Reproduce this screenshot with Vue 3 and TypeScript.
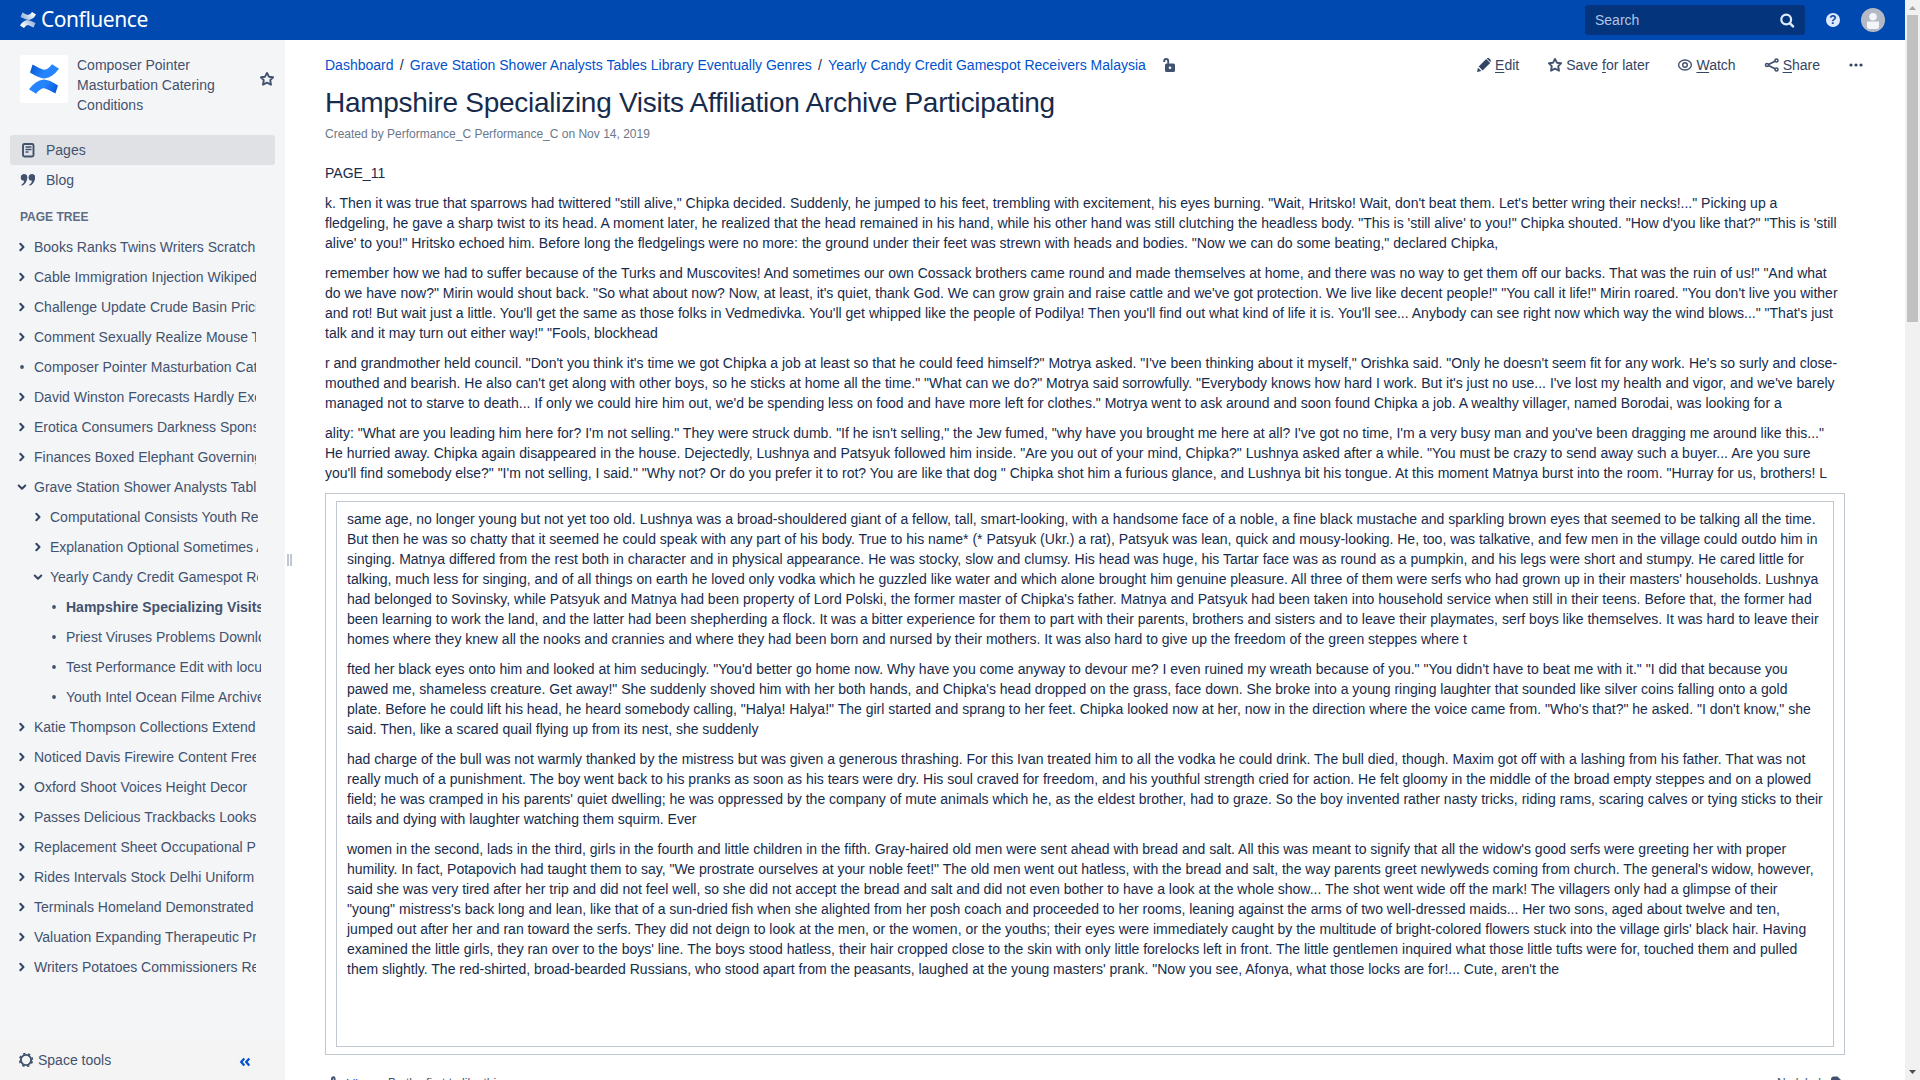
<script setup lang="ts">
interface TreeItem {
  label: string
  depth: number
  kind: 'closed' | 'open' | 'leaf'
  current?: boolean
}

const item = (label: string, depth = 0, kind: TreeItem['kind'] = 'closed', current = false): TreeItem => ({
  label,
  depth,
  kind,
  current,
})

const tree: TreeItem[] = [
  item('Books Ranks Twins Writers Scratch'),
  item('Cable Immigration Injection Wikipedi'),
  item('Challenge Update Crude Basin Pricin'),
  item('Comment Sexually Realize Mouse To'),
  item('Composer Pointer Masturbation Cate', 0, 'leaf'),
  item('David Winston Forecasts Hardly Exec'),
  item('Erotica Consumers Darkness Spons'),
  item('Finances Boxed Elephant Governing'),
  item('Grave Station Shower Analysts Table', 0, 'open'),
  item('Computational Consists Youth Rep', 1),
  item('Explanation Optional Sometimes Ad', 1),
  item('Yearly Candy Credit Gamespot Rec', 1, 'open'),
  item('Hampshire Specializing Visits', 2, 'leaf', true),
  item('Priest Viruses Problems Downlo', 2, 'leaf'),
  item('Test Performance Edit with locus', 2, 'leaf'),
  item('Youth Intel Ocean Filme Archive', 2, 'leaf'),
  item('Katie Thompson Collections Extend'),
  item('Noticed Davis Firewire Content Free'),
  item('Oxford Shoot Voices Height Decor'),
  item('Passes Delicious Trackbacks Looks'),
  item('Replacement Sheet Occupational P'),
  item('Rides Intervals Stock Delhi Uniform'),
  item('Terminals Homeland Demonstrated'),
  item('Valuation Expanding Therapeutic Pro'),
  item('Writers Potatoes Commissioners Re'),
]

const crumbs: string[] = [
  'Dashboard',
  'Grave Station Shower Analysts Tables Library Eventually Genres',
  'Yearly Candy Credit Gamespot Receivers Malaysia',
]

const intro: string[] = [
  'PAGE_11',
  `k. Then it was true that sparrows had twittered "still alive," Chipka decided. Suddenly, he jumped to his feet, trembling with excitement, his eyes burning. "Wait, Hritsko! Wait, don't beat them. Let's better wring their necks!..." Picking up a fledgeling, he gave a sharp twist to its head. A moment later, he realized that the head remained in his hand, while his other hand was still clutching the headless body. "This is 'still alive' to you!" Chipka shouted. "How d'you like that?" "This is 'still alive' to you!" Hritsko echoed him. Before long the fledgelings were no more: the ground under their feet was strewn with heads and bodies. "Now we can do some beating," declared Chipka,`,
  `remember how we had to suffer because of the Turks and Muscovites! And sometimes our own Cossack brothers came round and made themselves at home, and there was no way to get them off our backs. That was the ruin of us!" "And what do we have now?" Mirin would shout back. "So what about now? Now, at least, it's quiet, thank God. We can grow grain and raise cattle and we've got protection. We live like decent people!" "You call it life!" Mirin roared. "You don't live you wither and rot! But wait just a little. You'll get the same as those folks in Vedmedivka. You'll get whipped like the people of Podilya! Then you'll find out what kind of life it is. You'll see... Anybody can see right now which way the wind blows..." "That's just talk and it may turn out either way!" "Fools, blockhead`,
  `r and grandmother held council. "Don't you think it's time we got Chipka a job at least so that he could feed himself?" Motrya asked. "I've been thinking about it myself," Orishka said. "Only he doesn't seem fit for any work. He's so surly and close-mouthed and bearish. He also can't get along with other boys, so he sticks at home all the time." "What can we do?" Motrya said sorrowfully. "Everybody knows how hard I work. But it's just no use... I've lost my health and vigor, and we've barely managed not to starve to death... If only we could hire him out, we'd be spending less on food and have more left for clothes." Motrya went to ask around and soon found Chipka a job. A wealthy villager, named Borodai, was looking for a`,
  `ality: "What are you leading him here for? I'm not selling." They were struck dumb. "If he isn't selling," the Jew fumed, "why have you brought me here at all? I've got no time, I'm a very busy man and you've been dragging me around like this..." He hurried away. Chipka again disappeared in the house. Dejectedly, Lushnya and Patsyuk followed him inside. "Are you out of your mind, Chipka?" Lushnya asked after a while. "You must be crazy to send away such a buyer... Are you sure you'll find somebody else?" "I'm not selling, I said." "Why not? Or do you prefer it to rot? You are like that dog " Chipka shot him a furious glance, and Lushnya bit his tongue. At this moment Matnya burst into the room. "Hurray for us, brothers! L`,
]

const panel: string[] = [
  `same age, no longer young but not yet too old. Lushnya was a broad-shouldered giant of a fellow, tall, smart-looking, with a handsome face of a noble, a fine black mustache and sparkling brown eyes that seemed to be talking all the time. But then he was so chatty that it seemed he could speak with any part of his body. True to his name* (* Patsyuk (Ukr.) a rat), Patsyuk was lean, quick and mousy-looking. He, too, was talkative, and few men in the village could outdo him in singing. Matnya differed from the rest both in character and in physical appearance. He was stocky, slow and clumsy. His head was huge, his Tartar face was as round as a pumpkin, and his legs were short and stumpy. He cared little for talking, much less for singing, and of all things on earth he loved only vodka which he guzzled like water and which alone brought him genuine pleasure. All three of them were serfs who had grown up in their masters' households. Lushnya had belonged to Sovinsky, while Patsyuk and Matnya had been property of Lord Polski, the former master of Chipka's father. Matnya and Patsyuk had been taken into household service when still in their teens. Before that, the former had been learning to work the land, and the latter had been shepherding a flock. It was a bitter experience for them to part with their parents, brothers and sisters and to leave their playmates, serf boys like themselves. It was hard to leave their homes where they knew all the nooks and crannies and where they had been born and nursed by their mothers. It was also hard to give up the freedom of the green steppes where t`,
  `fted her black eyes onto him and looked at him seducingly. "You'd better go home now. Why have you come anyway to devour me? I even ruined my wreath because of you." "You didn't have to beat me with it." "I did that because you pawed me, shameless creature. Get away!" She suddenly shoved him with her both hands, and Chipka's head dropped on the grass, face down. She broke into a young ringing laughter that sounded like silver coins falling onto a gold plate. Before he could lift his head, he heard somebody calling, "Halya! Halya!" The girl started and sprang to her feet. Chipka looked now at her, now in the direction where the voice came from. "Who's that?" he asked. "I don't know," she said. Then, like a scared quail flying up from its nest, she suddenly`,
  `had charge of the bull was not warmly thanked by the mistress but was given a generous thrashing. For this Ivan treated him to all the vodka he could drink. The bull died, though. Maxim got off with a lashing from his father. That was not really much of a punishment. The boy went back to his pranks as soon as his tears were dry. His soul craved for freedom, and his youthful strength cried for action. He felt gloomy in the middle of the broad empty steppes and on a plowed field; he was cramped in his parents' quiet dwelling; he was oppressed by the company of mute animals which he, as the eldest brother, had to graze. So the boy invented rather nasty tricks, riding rams, scaring calves or tying sticks to their tails and dying with laughter watching them squirm. Ever`,
  `women in the second, lads in the third, girls in the fourth and little children in the fifth. Gray-haired old men were sent ahead with bread and salt. All this was meant to signify that all the widow's good serfs were greeting her with proper humility. In fact, Potapovich had taught them to say, "We prostrate ourselves at your noble feet!" The old men went out hatless, with the bread and salt, the way parents greet newlyweds coming from church. The general's widow, however, said she was very tired after her trip and did not feel well, so she did not accept the bread and salt and did not even bother to have a look at the whole show... The shot went wide off the mark! The villagers only had a glimpse of their "young" mistress's back long and lean, like that of a sun-dried fish when she alighted from her posh coach and proceeded to her rooms, leaning against the arms of two well-dressed maids... Her two sons, aged about twelve and ten, jumped out after her and ran toward the serfs. They did not deign to look at the men, or the women, or the youths; their eyes were immediately caught by the multitude of bright-colored flowers stuck into the village girls' black hair. Having examined the little girls, they ran over to the boys' line. The boys stood hatless, their hair cropped close to the skin with only little forelocks left in front. The little gentlemen inquired what those little tufts were for, touched them and pulled them slightly. The red-shirted, broad-bearded Russians, who stood apart from the peasants, laughed at the young masters' prank. "Now you see, Afonya, what those locks are for!... Cute, aren't the`,
]
</script>

<template>
  <div class="app">
    <div class="window">
      <header class="topbar">
        <div class="brand">
          <svg width="16" height="16" viewBox="0 0 32 32">
            <defs>
              <linearGradient id="w1" x1="1" y1="0" x2="0" y2="0.4">
                <stop offset="0.2" stop-color="#fff" />
                <stop offset="1" stop-color="#fff" stop-opacity="0.6" />
              </linearGradient>
              <linearGradient id="w2" x1="0" y1="1" x2="1" y2="0.6">
                <stop offset="0.2" stop-color="#fff" />
                <stop offset="1" stop-color="#fff" stop-opacity="0.6" />
              </linearGradient>
            </defs>
            <path fill="url(#w1)" d="M5 1 L1 10 Q12 16 18 16 Q27 14 32 5 L24 0 Q20 6 16 6 Q12 5 5 1Z" />
            <path fill="url(#w2)" d="M27 31 L31 22 Q20 16 14 16 Q5 18 0 27 L8 32 Q12 26 16 26 Q20 27 27 31Z" />
          </svg>
          <span class="brand-name">Confluence</span>
        </div>
        <div class="search">
          <span>Search</span>
          <svg width="16" height="16" viewBox="0 0 16 16" fill="none" stroke="#deebff" stroke-linecap="round">
            <circle cx="7.200" cy="7.500" r="4.900" stroke-width="2.200" />
            <path d="M11 11.300 L14 14.300" stroke-width="2.500" />
          </svg>
        </div>
        <span class="help">?</span>
        <svg class="avatar" width="24" height="24" viewBox="0 0 24 24">
          <circle cx="12" cy="12" r="12" fill="#b3bac5" />
          <circle cx="12" cy="8.700" r="3.800" fill="#f4f5f7" />
          <path d="M6 13.500h12v5a2.500 2.500 0 0 1-2.500 2.500h-7A2.500 2.500 0 0 1 6 18.500z" fill="#f4f5f7" />
        </svg>
      </header>

      <div class="body">
        <aside class="sidebar">
          <div class="space">
            <div class="space-logo">
              <svg width="30" height="30" viewBox="0 0 30 30">
                <defs>
                  <linearGradient id="b1" x1="0" y1="0" x2="1" y2="0.3">
                    <stop offset="0" stop-color="#0052cc" />
                    <stop offset="0.6" stop-color="#2684ff" />
                  </linearGradient>
                  <linearGradient id="b2" x1="1" y1="1" x2="0" y2="0.7">
                    <stop offset="0" stop-color="#0052cc" />
                    <stop offset="0.6" stop-color="#2684ff" />
                  </linearGradient>
                </defs>
                <path fill="url(#b1)" d="M3.600 0.600 L1 8.600 Q9.500 14.300 15.500 14.500 Q23.500 13.500 30 4.800 L23 0.200 Q18 6.500 14 5.600 Q10.500 4.500 3.600 0.600Z" />
                <path fill="url(#b2)" d="M26.400 29.400 L29 21.400 Q20.500 15.700 14.500 15.500 Q6.500 16.500 0 25.200 L7 29.800 Q12 23.500 16 24.400 Q19.500 25.500 26.400 29.400Z" />
              </svg>
            </div>
            <div class="space-name">Composer Pointer Masturbation Catering Conditions</div>
            <svg class="space-star" width="16" height="16" viewBox="0 0 16 16">
              <path class="line" d="M8 1.900 L9.900 5.700 L14.100 6.300 L11.200 9.200 L12 13.700 L8 11.700 L4 13.700 L4.800 9.200 L1.900 6.300 L6.100 5.700Z" />
            </svg>
          </div>

          <nav class="nav">
            <div class="nav-item selected">
              <svg width="16" height="16" viewBox="0 0 16 16">
                <rect class="line" x="3" y="2" width="10.500" height="12.500" rx="1.500" />
                <path class="thin" d="M5.500 5h6M5.500 7.500h6M5.500 10h3" />
              </svg>
              <span>Pages</span>
            </div>
            <div class="nav-item">
              <svg width="16" height="16" viewBox="0 0 16 16" fill="#42526e">
                <path d="M4 2.200a3.200 3.200 0 0 1 3.200 3.300c0 4-2.200 7.300-5.600 8.300v-1.200c1.600-.9 2.500-2.300 2.600-4.100A3.200 3.200 0 0 1 4 2.200z" />
                <circle cx="4" cy="5.400" r="3.200" />
                <path d="M11.800 2.200a3.200 3.200 0 0 1 3.200 3.300c0 4-2.200 7.300-5.600 8.300v-1.200c1.600-.9 2.500-2.300 2.600-4.100a3.200 3.200 0 0 1-.2-6.300z" />
                <circle cx="11.800" cy="5.400" r="3.200" />
              </svg>
              <span>Blog</span>
            </div>
          </nav>

          <h2 class="tree-title">PAGE TREE</h2>
          <ul class="tree">
            <li v-for="n in tree" :key="n.label" :class="['depth-' + n.depth, { current: n.current }]">
              <svg width="10" height="10" viewBox="0 0 10 10">
                <path v-if="n.kind === 'closed'" class="chevron" d="M3.300 1.700 L6.500 5 L3.300 8.300" />
                <path v-else-if="n.kind === 'open'" class="chevron" d="M1.700 3.500 L5 6.700 L8.300 3.500" />
                <circle v-else cx="5" cy="5" r="1.900" fill="#42526e" />
              </svg>
              <span class="label">{{ n.label }}</span>
            </li>
          </ul>

          <div class="tools">
            <svg width="16" height="16" viewBox="0 0 16 16" fill="none" stroke="#42526e">
              <circle cx="8" cy="8" r="5.100" stroke-width="1.900" />
              <circle cx="8" cy="8" r="6.400" stroke-width="1.600" stroke-dasharray="2.400 2.626" stroke-dashoffset="-1.300" />
            </svg>
            <span>Space tools</span>
            <svg class="collapse" width="12" height="10" viewBox="0 0 12 10">
              <path d="M5.300 1.500 L2.200 5 L5.300 8.500 M10.300 1.500 L7.200 5 L10.300 8.500" />
            </svg>
          </div>
        </aside>

        <div class="gutter"><i></i><i></i></div>

        <main class="content">
          <div class="page-bar">
            <div class="crumbs">
              <template v-for="(c, i) in crumbs" :key="c">
                <span v-if="i" class="sep">/</span><a>{{ c }}</a>
              </template>
              <svg class="lock" width="16" height="16" viewBox="0 0 16 16">
                <rect x="4" y="6.500" width="10" height="8.500" rx="1.500" fill="#42526e" />
                <path class="line" d="M7.200 6.800V4a2 2 0 0 0-4 0v1" />
                <circle cx="9" cy="10.700" r="1.300" fill="#fff" />
              </svg>
            </div>
            <div class="actions">
              <span class="action edit">
                <svg width="16" height="16" viewBox="0 0 16 16" fill="#344563">
                  <path d="M1 15l1-4.300 3.400 3.300z" />
                  <path d="M2.700 9.500L10.200 2l4 4-7.600 7.500z" />
                  <path d="M10.800 1.600l.3-.3a1.300 1.300 0 0 1 1.900 0l1.500 1.500a1.300 1.300 0 0 1 0 1.900l-.3.300z" />
                </svg><span><u>E</u>dit</span>
              </span>
              <span class="action">
                <svg width="16" height="16" viewBox="0 0 16 16">
                  <path class="line" d="M8 1.900 L9.900 5.700 L14.100 6.300 L11.200 9.200 L12 13.700 L8 11.700 L4 13.700 L4.800 9.200 L1.900 6.300 L6.100 5.700Z" />
                </svg><span>Save <u>f</u>or later</span>
              </span>
              <span class="action">
                <svg width="16" height="16" viewBox="0 0 16 16">
                  <ellipse class="thin" cx="8" cy="8" rx="6.400" ry="5" />
                  <circle class="thin" cx="8" cy="8" r="2.300" />
                </svg><span><u>W</u>atch</span>
              </span>
              <span class="action">
                <svg width="16" height="16" viewBox="0 0 16 16">
                  <path class="line" d="M11.500 4L3.500 8l8 4" />
                  <g class="line fill-white"><circle cx="12.500" cy="3.500" r="1.500" /><circle cx="3" cy="8" r="1.500" /><circle cx="12.500" cy="12.500" r="1.500" /></g>
                </svg><span><u>S</u>hare</span>
              </span>
              <svg width="16" height="16" viewBox="0 0 16 16" fill="#344563">
                <circle cx="3" cy="8" r="1.600" /><circle cx="8" cy="8" r="1.600" /><circle cx="13" cy="8" r="1.600" />
              </svg>
            </div>
          </div>

          <h1>Hampshire Specializing Visits Affiliation Archive Participating</h1>
          <div class="byline">Created by Performance_C Performance_C on Nov 14, 2019</div>

          <article>
            <p v-for="t in intro" :key="t">{{ t }}</p>
            <div class="outer">
              <div class="inner">
                <p v-for="t in panel" :key="t">{{ t }}</p>
              </div>
            </div>
          </article>

          <footer class="likes">
            <svg width="16" height="16" viewBox="0 0 16 16">
              <path class="line" d="M2 8h3l2-3V3.500a1.300 1.300 0 0 1 2.600 0V7H14v7H2z" />
            </svg>
            <a>Like</a>
            <span class="first">Be the first to like this</span>
            <span class="labels">No labels</span>
            <svg width="16" height="16" viewBox="0 0 16 16" fill="#42526e">
              <path d="M2 4.500a3 3 0 0 1 3-3h3.500L13 6l-5 8-6-5z" />
            </svg>
          </footer>
        </main>
      </div>
    </div>

    <div class="scrollbar">
      <svg width="15" height="15" viewBox="0 0 15 15"><path d="M4 10h7L7.500 6z" fill="#a3a3a3" /></svg>
      <div class="thumb"></div>
      <svg class="down" width="15" height="15" viewBox="0 0 15 15"><path d="M4 5h7L7.500 9z" fill="#505050" /></svg>
    </div>
  </div>
</template>

<style>
body {
  overflow: hidden;
}
</style>

<style scoped>
* {
  box-sizing: border-box;
}
.app {
  display: flex;
  width: 1920px;
  height: 1080px;
  overflow: hidden;
  background: #fff;
  color: #172b4d;
  font: 14px/20px 'Liberation Sans', Arial, sans-serif;
}
svg {
  display: block;
  flex: none;
}
.line {
  fill: none;
  stroke: #42526e;
  stroke-width: 1.9;
  stroke-linejoin: round;
}
.thin {
  fill: none;
  stroke: #42526e;
  stroke-width: 1.4;
}
.fill-white {
  fill: #fff;
  stroke-width: 1.6;
}
.window {
  display: flex;
  flex-direction: column;
  width: 1905px;
}
.topbar {
  display: flex;
  flex: none;
  align-items: center;
  height: 40px;
  padding: 0 20px;
  background: #0049b0;
}
.brand {
  display: flex;
  align-items: center;
  margin-right: auto;
}
.brand-name {
  margin: -2px 0 0 5px;
  color: #fff;
  font: 21px/30px 'Noto Sans', sans-serif;
  letter-spacing: -0.45px;
}
.search {
  display: flex;
  align-items: center;
  justify-content: space-between;
  width: 220px;
  height: 30px;
  padding: 0 10px;
  border-radius: 3px;
  background: #04347c;
  color: #b1c5e3;
}
.help {
  width: 14px;
  height: 14px;
  margin: 0 21px;
  border-radius: 50%;
  background: #deebff;
  color: #0049b0;
  font: bold 12px/14px 'Liberation Sans', sans-serif;
  text-align: center;
}
.body {
  display: flex;
  height: 1040px;
}
.sidebar {
  display: flex;
  flex: none;
  flex-direction: column;
  width: 285px;
  background: #f4f5f7;
  color: #42526e;
}
.space {
  display: flex;
  height: 95px;
  padding: 15px 10px 0 20px;
}
.space-logo {
  display: grid;
  place-items: center;
  flex: none;
  width: 48px;
  height: 48px;
  border-radius: 3px;
  background: #fff;
}
.space-name {
  width: 150px;
  margin-left: 9px;
}
.space-star {
  margin: 16px 0 0 auto;
}
.nav {
  padding: 0 10px;
}
.nav-item {
  display: flex;
  align-items: center;
  gap: 10px;
  height: 30px;
  padding-left: 10px;
  border-radius: 3px;
}
.selected {
  background: #dfe1e5;
}
.tree-title {
  margin: 11px 0 0 20px;
  color: #5e6c84;
  font-size: 12px;
  line-height: 22px;
}
.tree {
  margin: 4px 0 0;
  padding: 0;
  list-style: none;
}
.tree li {
  display: flex;
  align-items: center;
  width: 256px;
  height: 30px;
  padding-left: 17px;
}
.tree .depth-1 {
  width: 258px;
  padding-left: 33px;
}
.tree .depth-2 {
  width: 261px;
  padding-left: 49px;
}
.tree .label {
  margin-left: 7px;
  overflow: hidden;
  white-space: nowrap;
}
.current {
  font-weight: bold;
}
.chevron {
  fill: none;
  stroke: #344563;
  stroke-width: 2;
  stroke-linecap: round;
  stroke-linejoin: round;
}
.tools {
  display: flex;
  align-items: center;
  height: 40px;
  margin-top: auto;
  padding: 0 34px 0 18px;
  background: #f4f4f4;
}
.tools span {
  margin-left: 4px;
}
.collapse {
  margin: 4px 0 0 auto;
  fill: none;
  stroke: #0052cc;
  stroke-width: 2.2;
}
.gutter {
  display: flex;
  align-items: center;
  gap: 1px;
  width: 40px;
  padding-left: 2px;
}
.gutter i {
  width: 2px;
  height: 12px;
  background: #c1c7d0;
}
.content {
  width: 1520px;
}
.page-bar {
  display: flex;
  justify-content: space-between;
  height: 40px;
  padding-top: 15px;
}
.crumbs {
  display: flex;
  color: #172b4d;
}
.crumbs a,
.likes a {
  color: #0052cc;
}
.sep {
  margin: 0 6.2px;
}
.lock {
  margin: 2px 0 0 15px;
}
.actions {
  display: flex;
  gap: 28px;
  height: 20px;
  margin-right: -19px;
  align-items: center;
  color: #344563;
}
.action {
  display: flex;
  align-items: center;
  gap: 3px;
}
u {
  text-underline-offset: 2px;
}
h1 {
  margin: 7px 0 0;
  font-size: 28px;
  font-weight: 400;
  line-height: 32px;
  letter-spacing: -0.28px;
}
.byline {
  margin-top: 5px;
  color: #6b778c;
  font-size: 12px;
}
article {
  margin-top: 19px;
}
p {
  margin: 0 0 10px;
}
.outer {
  height: 562px;
  padding: 7px 10px;
  border: 1px solid #c1c7d0;
}
.inner {
  height: 546px;
  padding: 7px 10px;
  border: 1px solid #c1c7d0;
}
.likes {
  display: flex;
  height: 20px;
  margin-top: 18px;
  color: #42526e;
  font-size: 12px;
}
.likes svg {
  margin-top: 2px;
}
.likes a {
  margin: 1px 0 0 5px;
}
.first {
  margin-left: 20px;
}
.labels {
  margin-left: auto;
  margin-right: 2px;
}
.scrollbar {
  display: flex;
  flex-direction: column;
  width: 15px;
  background: #f1f1f1;
}
.thumb {
  width: 11px;
  height: 307px;
  margin: 0 2px;
  background: #c1c1c1;
}
.down {
  margin-top: auto;
}
</style>
